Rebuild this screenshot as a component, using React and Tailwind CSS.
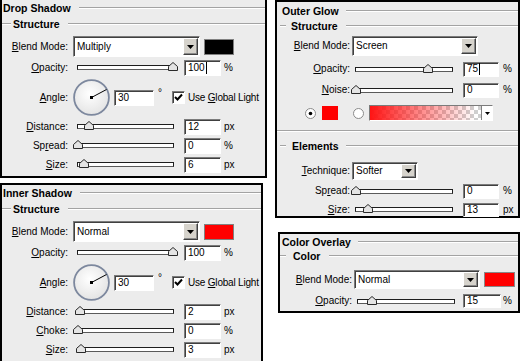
import React from 'react';

const sunken =
  'border border-t-[#7b7b7b] border-l-[#7b7b7b] border-b-white border-r-white shadow-[inset_1px_1px_0_#404040]';

const Line = ({ className = '' }) => (
  <div className={`h-[2px] border-t border-t-[#a3a3a3] border-b border-b-white ${className}`} />
);

const Lbl = ({ className = '', children }) => (
  <div className={`text-right whitespace-nowrap shrink-0 ${className}`}>{children}</div>
);

const Triangle = () => (
  <svg width="7" height="4" viewBox="0 0 7 4">
    <path d="M0 0H7L3.5 4Z" fill="#000" />
  </svg>
);

const Select = ({ value, className = '' }) => (
  <div className={`flex items-stretch bg-white shrink-0 ${sunken} ${className}`}>
    <span className="flex-1 flex items-center pl-[3px]">{value}</span>
    <div className="my-[1px] mr-[1px] w-[15px] flex items-center justify-center bg-[#d6d3cc] border border-t-white border-l-white border-b-[#404040] border-r-[#404040] shadow-[inset_-1px_-1px_0_#8a8a8a]">
      <Triangle />
    </div>
  </div>
);

const Field = ({ value, caret, className = '' }) => (
  <div className={`flex items-center bg-white shrink-0 ${sunken} ${className}`}>
    <span className="pl-[3px]">{value}</span>
    {caret && <span className="ml-[1px] w-px h-[12px] bg-black" />}
  </div>
);

const Thumb = () => (
  <svg width="10" height="9" viewBox="0 0 10 9" className="block">
    <path d="M5 0.5L9.5 4.5V8.5H0.5V4.5Z" fill="#e4e4e4" stroke="#2a2a2a" />
  </svg>
);

const Slider = ({ value, className = '' }) => (
  <div className={`relative h-[5px] bg-white border border-[#1e1e1e] border-b-[#5a5a5a] shrink-0 ${className}`}>
    <div className="absolute bottom-[-2px] -translate-x-1/2" style={{ left: `${value}%` }}>
      <Thumb />
    </div>
  </div>
);

const SliderRow = ({ label, value, unit, caret, className = '', lw, tc, fc, uc }) => (
  <div className={`flex items-center ${className}`}>
    <Lbl className={lw}>{label}</Lbl>
    <Slider value={value} className={tc} />
    <Field value={value} caret={caret} className={fc} />
    <span className={uc}>{unit}</span>
  </div>
);

const Dial = ({ id }) => (
  <svg width="37" height="37" viewBox="0 0 37 37" className="block">
    <defs>
      <radialGradient id={id} cx="45%" cy="40%" r="65%">
        <stop offset="0" stopColor="#ffffff" />
        <stop offset="1" stopColor="#e2e2e2" />
      </radialGradient>
    </defs>
    <circle cx="18.5" cy="18.5" r="17.4" fill={`url(#${id})`} stroke="#7d889e" strokeWidth="1.8" />
    <line x1="18.5" y1="18.5" x2="33.5" y2="10.5" stroke="#000" strokeWidth="1" />
    <rect x="17" y="17" width="3" height="3" fill="#000" />
  </svg>
);

const Check = ({ className = '' }) => (
  <div className={`w-[13px] h-[13px] bg-white flex items-center justify-center shrink-0 ${sunken} ${className}`}>
    <svg width="9" height="9" viewBox="0 0 9 9">
      <path d="M1 4L3.5 6.5L8 1.5" fill="none" stroke="#000" strokeWidth="2" />
    </svg>
  </div>
);

const Radio = ({ on }) => (
  <svg width="11" height="11" viewBox="0 0 11 11" className="block">
    <circle cx="5.5" cy="5.5" r="5" fill="#fff" stroke="#8a8a8a" />
    {on && <circle cx="5.5" cy="5.5" r="1.8" fill="#000" />}
  </svg>
);

const left = {
  lw: 'w-[66px]',
  tc: 'ml-[9px] w-[97px]',
  fc: 'ml-[10px] w-[37px] h-[16px]',
  uc: 'ml-[3px]',
};

const ShadowPanel = ({ title, blend, swatch, id, rows, className = '' }) => (
  <div className={`bg-[#ececec] border-black border-l-2 border-r-2 border-b-2 shrink-0 ${className}`}>
    <div className="flex items-center h-[16px]">
      <span className="pl-[1px] font-bold text-[10.5px]">{title}</span>
      <Line className="flex-1 ml-[8px]" />
    </div>
    <div className="flex items-center h-[16px]">
      <Line className="w-[9px]" />
      <span className="ml-[2px] font-bold text-[10.5px]">Structure</span>
      <Line className="flex-1 ml-[8px]" />
    </div>
    <div className="mt-[4px] flex items-center h-[21px]">
      <Lbl className="w-[66px]"><u>B</u>lend Mode:</Lbl>
      <Select value={blend} className="ml-[5px] w-[127px] h-[21px]" />
      <div className={`ml-[4px] w-[30px] h-[16px] border border-[#808080] ${swatch}`} />
    </div>
    <SliderRow {...left} className="mt-[2px] h-[17px]" label={<><u>O</u>pacity:</>} value={100} unit="%" caret={id === 'd1'} />
    <div className="mt-[3px] flex items-center h-[37px]">
      <Lbl className="w-[66px]"><u>A</u>ngle:</Lbl>
      <div className="ml-[5px]"><Dial id={id} /></div>
      <Field value="30" className="ml-[4px] w-[40px] h-[16px]" />
      <span className="ml-[4px] self-start mt-[9px]">°</span>
      <Check className="ml-[10px]" />
      <span className="ml-[3px] whitespace-nowrap tracking-[-0.2px]">Use <u>G</u>lobal Light</span>
    </div>
    {rows.map((r) => (
      <SliderRow key={r.key} {...left} className="mt-[2px] h-[17px]" label={r.label} value={r.value} unit={r.unit} />
    ))}
  </div>
);

const glow = {
  lw: 'w-[73px]',
  tc: 'ml-[5px] w-[98px]',
  fc: 'ml-[10px] w-[36px] h-[15px]',
  uc: 'ml-[4px]',
};

const OuterGlow = () => (
  <div className="h-[218px] shrink-0 bg-[#ececec] border-2 border-black">
    <div className="flex items-center h-[18px]">
      <span className="pl-[5px] font-bold text-[10.5px]">Outer Glow</span>
      <Line className="flex-1 ml-[7px]" />
    </div>
    <div className="flex items-center h-[12px]">
      <Line className="ml-[3px] w-[6px]" />
      <span className="ml-[5px] font-bold text-[10.5px]">Structure</span>
      <Line className="flex-1 ml-[8px]" />
    </div>
    <div className="mt-[4px] flex items-center h-[20px]">
      <Lbl className="w-[73px]"><u>B</u>lend Mode:</Lbl>
      <Select value="Screen" className="ml-[2px] w-[126px] h-[20px]" />
    </div>
    <SliderRow {...glow} className="mt-[5px] h-[16px]" label={<><u>O</u>pacity:</>} value={75} unit="%" caret />
    <SliderRow {...glow} className="mt-[5px] h-[16px]" label={<><u>N</u>oise:</>} value={0} unit="%" />
    <div className="mt-[7px] flex items-center h-[16px]">
      <div className="ml-[28px]"><Radio on /></div>
      <div className="ml-[6px] w-[16px] h-[14px] bg-[#ff0000]" />
      <div className="ml-[15px]"><Radio /></div>
      <div className={`ml-[5px] w-[124px] h-[16px] flex bg-white ${sunken}`}>
        <div className="flex-1 [background:linear-gradient(to_right,#ff1414,rgba(255,40,40,0.55)_45%,rgba(255,60,60,0)_95%),repeating-conic-gradient(#cfcfcf_0_25%,#ffffff_0_50%)_0_0/8px_8px]" />
        <div className="w-[11px] flex items-center justify-center border-l border-[#808080] bg-white">
          <svg width="5" height="3" viewBox="0 0 5 3"><path d="M0 0H5L2.5 3Z" fill="#000" /></svg>
        </div>
      </div>
    </div>
    <Line className="mt-[9px]" />
    <div className="mt-[6px] flex items-center h-[16px]">
      <Line className="ml-[3px] w-[6px]" />
      <span className="ml-[6px] font-bold text-[10.5px]">Elements</span>
      <Line className="flex-1 ml-[7px]" />
    </div>
    <div className="mt-[8px] flex items-center h-[18px]">
      <Lbl className="w-[73px]"><u>T</u>echnique:</Lbl>
      <Select value="Softer" className="ml-[2px] w-[66px] h-[18px]" />
    </div>
    <SliderRow {...glow} className="mt-[3px] h-[16px]" label={<>Sp<u>r</u>ead:</>} value={0} unit="%" />
    <SliderRow {...glow} fc="ml-[10px] w-[36px] h-[14px]" className="mt-[3px] h-[15px]" label={<><u>S</u>ize:</>} value={13} unit="px" />
  </div>
);

const ColorOverlay = () => (
  <div className="ml-[3px] mt-[14px] h-[81px] shrink-0 bg-[#ececec] border-2 border-black">
    <div className="flex items-center h-[16px]">
      <span className="pl-[2px] font-bold text-[10.5px]">Color Overlay</span>
      <Line className="flex-1 ml-[7px]" />
    </div>
    <div className="flex items-center h-[12px]">
      <Line className="w-[6px]" />
      <span className="ml-[7px] font-bold text-[10.5px]">Color</span>
      <Line className="flex-1 ml-[9px]" />
    </div>
    <div className="mt-[8px] flex items-center h-[19px]">
      <Lbl className="w-[72px]"><u>B</u>lend Mode:</Lbl>
      <Select value="Normal" className="ml-[2px] w-[126px] h-[19px]" />
      <div className="ml-[4px] w-[31px] h-[15px] bg-[#ff0000] border border-[#888888]" />
    </div>
    <SliderRow
      lw="w-[72px]"
      tc="ml-[5px] w-[98px]"
      fc="ml-[8px] w-[38px] h-[14px]"
      uc="ml-[2px]"
      className="mt-[4px] h-[16px]"
      label={<><u>O</u>pacity:</>}
      value={15}
      unit="%"
    />
  </div>
);

export default function App() {
  return (
    <div className="w-[521px] h-[361px] overflow-hidden bg-white flex text-[10px] leading-none text-black font-['Liberation_Sans',Arial,sans-serif]">
      <div className="w-[267px] shrink-0 flex flex-col">
        <ShadowPanel
          title="Drop Shadow"
          blend="Multiply"
          swatch="bg-black"
          id="d1"
          className="h-[178px]"
          rows={[
            { key: 'dist', label: <><u>D</u>istance:</>, value: 12, unit: 'px' },
            { key: 'spread', label: <>Sp<u>r</u>ead:</>, value: 0, unit: '%' },
            { key: 'size', label: <><u>S</u>ize:</>, value: 6, unit: 'px' },
          ]}
        />
        <ShadowPanel
          title="Inner Shadow"
          blend="Normal"
          swatch="bg-[#ff0000]"
          id="d2"
          className="mt-[5px] w-[263px] h-[180px] border-t-2"
          rows={[
            { key: 'dist', label: <><u>D</u>istance:</>, value: 2, unit: 'px' },
            { key: 'choke', label: <><u>C</u>hoke:</>, value: 0, unit: '%' },
            { key: 'size', label: <><u>S</u>ize:</>, value: 3, unit: 'px' },
          ]}
        />
      </div>
      <div className="ml-[8px] w-[245px] shrink-0 flex flex-col">
        <OuterGlow />
        <ColorOverlay />
      </div>
    </div>
  );
}
